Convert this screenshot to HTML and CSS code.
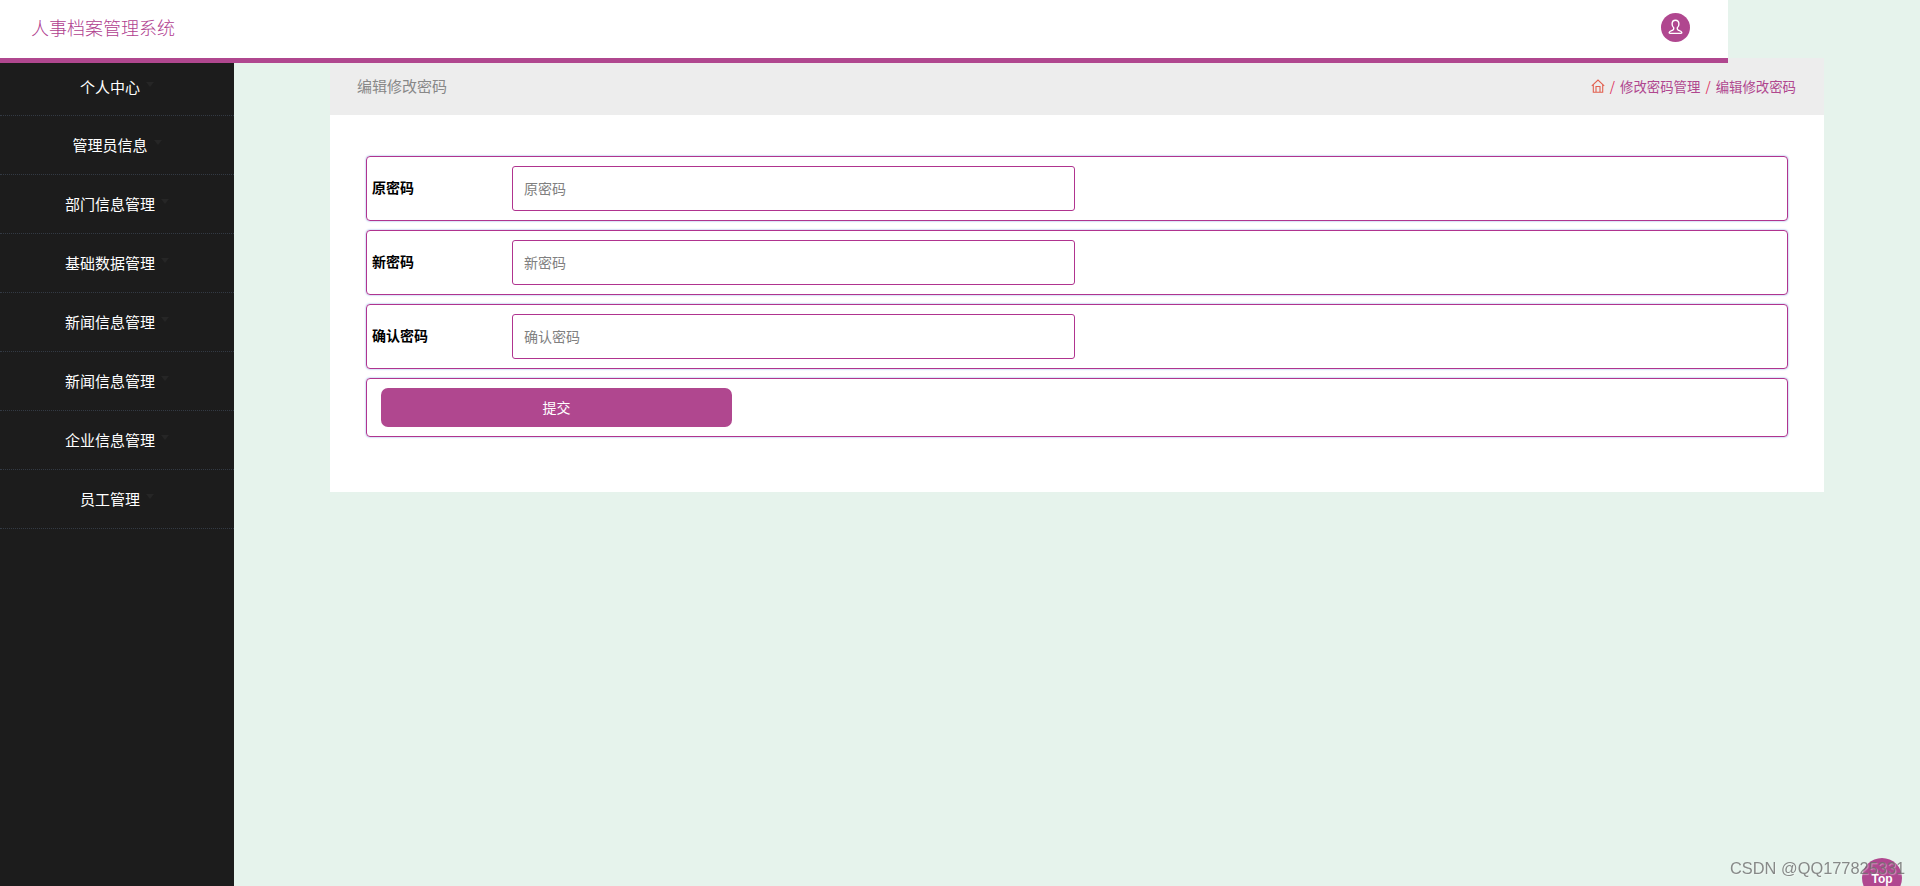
FILE: index.html
```html
<!DOCTYPE html>
<html lang="zh-CN">
<head>
    <meta charset="UTF-8">
    <title>人事档案管理系统</title>
    <link rel="stylesheet" href="styles.css">
</head>
<body>
    <header class="top-bar">
        <div class="brand">人事档案管理系统</div>
        <div class="avatar">
            <svg class="avatar-icon" viewBox="0 0 16 16">
                <path d="M8 1.2c-2 0-3.2 1.5-3.2 3.4 0 1.5.6 2.8 1.5 3.6v1.2c0 .6-.5.9-1.2 1.200-1.300.5-2.800 1-3 2.100-.1.500.2.800.7.800h10.400c.5 0 .8-.3.7-.8-.2-1.100-1.700-1.600-3-2.100-.7-.3-1.200-.6-1.200-1.200V8.200c.9-.8 1.500-2.100 1.500-3.600C11.200 2.700 10 1.200 8 1.200z"/>
            </svg>
        </div>
    </header>

    <div class="layout">
        <nav class="side-menu">
            <a class="menu-item first">个人中心<span class="caret"></span></a>
            <a class="menu-item">管理员信息<span class="caret"></span></a>
            <a class="menu-item">部门信息管理<span class="caret"></span></a>
            <a class="menu-item">基础数据管理<span class="caret"></span></a>
            <a class="menu-item">新闻信息管理<span class="caret"></span></a>
            <a class="menu-item">新闻信息管理<span class="caret"></span></a>
            <a class="menu-item">企业信息管理<span class="caret"></span></a>
            <a class="menu-item">员工管理<span class="caret"></span></a>
        </nav>

        <main class="content">
            <div class="page-title-bar">
                <span class="page-title">编辑修改密码</span>
                <div class="breadcrumb">
                    <svg class="home-icon" viewBox="0 0 14 14">
                        <path d="M.8 6.800 7 1l6.200 5.800M2.300 5.600v7.700h9.400V5.600M5 13.300V7.500h4v5.800"/>
                    </svg>
                    <span class="sep">/</span>
                    <span>修改密码管理</span>
                    <span class="sep">/</span>
                    <span>编辑修改密码</span>
                </div>
            </div>

            <form class="form-panel">
                <div class="form-row">
                    <label class="form-label">原密码</label>
                    <input class="form-input" type="password" placeholder="原密码">
                </div>
                <div class="form-row">
                    <label class="form-label">新密码</label>
                    <input class="form-input" type="password" placeholder="新密码">
                </div>
                <div class="form-row">
                    <label class="form-label">确认密码</label>
                    <input class="form-input" type="password" placeholder="确认密码">
                </div>
                <div class="form-row submit-row">
                    <button class="submit-button" type="button">提交</button>
                </div>
            </form>
        </main>
    </div>

    <div class="back-top">Top</div>
    <div class="watermark">CSDN @QQ177825331</div>
</body>
</html>
```

FILE: styles.css
```css
* {
    margin: 0;
    padding: 0;
    box-sizing: border-box;
}

body {
    font-family: "Noto Sans CJK SC", "Liberation Sans", sans-serif;
    background: #e6f3ec;
    height: 886px;
    overflow: hidden;
    display: flex;
    flex-direction: column;
}

.top-bar {
    width: 1728px;
    height: 63px;
    flex: none;
    background: #fff;
    border-bottom: 5px solid #b0478f;
    padding: 0 38px 0 31px;
    display: flex;
    align-items: center;
    justify-content: space-between;
    position: relative;
    z-index: 2;
}

.brand {
    font-size: 18px;
    font-weight: 300;
    color: #b0408f;
    padding-bottom: 5px;
}

.avatar {
    width: 29px;
    height: 29px;
    border-radius: 50%;
    background: #b0478f;
    display: flex;
    align-items: center;
    justify-content: center;
    margin-bottom: 3px;
}

.avatar-icon {
    width: 17px;
    height: 17px;
    fill: none;
    stroke: #fff;
    stroke-width: 1.300;
}

.layout {
    flex: 1;
    display: flex;
    min-height: 0;
}

.side-menu {
    width: 234px;
    flex: none;
    background: #1c1c1c;
}

.menu-item {
    display: flex;
    align-items: center;
    justify-content: center;
    height: 59px;
    font-size: 15px;
    color: #fff;
    border-bottom: 1px dotted #333a44;
    padding-bottom: 2px;
}

.menu-item.first {
    height: 53px;
    padding-bottom: 6px;
}

.caret {
    width: 0;
    height: 0;
    margin: -3px 0 0 6px;
    border-left: 4px solid transparent;
    border-right: 4px solid transparent;
    border-top: 5px solid #262626;
}

.content {
    width: 1494px;
    margin: -5px 0 0 96px;
    align-self: flex-start;
}

.page-title-bar {
    height: 57px;
    background: #ededed;
    padding: 0 28px 2px 27px;
    display: flex;
    align-items: center;
    justify-content: space-between;
}

.page-title {
    font-size: 15px;
    color: #888;
}

.breadcrumb {
    display: flex;
    align-items: center;
    gap: 5px;
    font-size: 13.400px;
    color: #b0478f;
}

.breadcrumb .sep {
    color: #e0305f;
}

.home-icon {
    width: 14px;
    height: 14px;
    fill: none;
    stroke: #e2604f;
    stroke-width: 1.100;
}

.form-panel {
    background: #fff;
    height: 377px;
    padding: 41px 36px 0;
    display: flex;
    flex-direction: column;
    gap: 9px;
}

.form-row {
    height: 65px;
    display: flex;
    align-items: center;
    padding-left: 5px;
    border: 1px solid #b0348f;
    border-radius: 4px;
    box-shadow: 0 0 2px #7f9fe0;
}

.form-label {
    width: 140px;
    flex: none;
    font-size: 14px;
    font-weight: 700;
    color: #000;
    margin-top: -3px;
}

.form-input {
    width: 563px;
    height: 45px;
    padding: 0 11px 2px;
    font-family: inherit;
    font-size: 14px;
    border: 1px solid #b0348f;
    border-radius: 3px;
    background: #fff;
    outline: none;
}

.form-input::placeholder {
    color: #808080;
}

.submit-row {
    height: 59px;
    padding-left: 14px;
}

.submit-button {
    width: 351px;
    height: 39px;
    padding-bottom: 2px;
    font-family: inherit;
    font-size: 14px;
    color: #fff;
    background: #b0478f;
    border: none;
    border-radius: 7px;
}

.back-top {
    position: fixed;
    left: 1862px;
    top: 858px;
    width: 40px;
    height: 40px;
    border-radius: 50%;
    background: #b0478f;
    color: #fff;
    font-family: "Liberation Sans", sans-serif;
    font-size: 12px;
    font-weight: 700;
    text-align: center;
    line-height: 42px;
}

.watermark {
    position: fixed;
    left: 1730px;
    top: 859px;
    font-family: "Liberation Sans", sans-serif;
    font-size: 16.400px;
    color: rgba(110, 110, 110, 0.8);
    text-shadow: 1px 1px 1px rgba(255, 255, 255, 0.4);
}
```
